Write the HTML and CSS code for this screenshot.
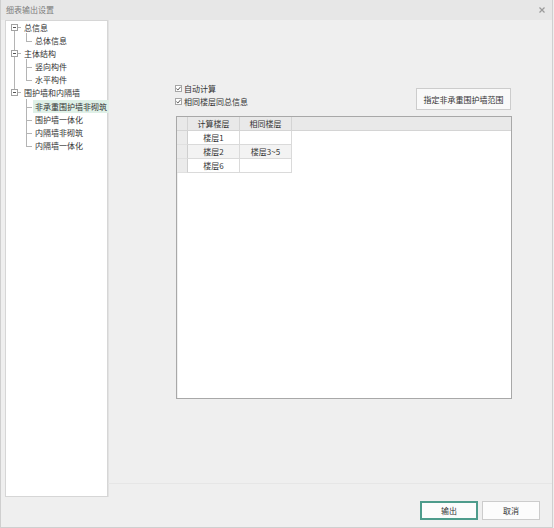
FILE: index.html
```html
<!DOCTYPE html>
<html lang="zh-CN">
<head>
<meta charset="utf-8">
<title>细表输出设置</title>
<link rel="stylesheet" href="styles.css">
</head>
<body>
<div class="window">
  <div class="titlebar">
    <span class="title">细表输出设置</span>
    <svg class="close" width="6" height="6" viewBox="0 0 6 6"><path d="M0.5 0.5L5.5 5.5M5.5 0.5L0.5 5.5" stroke="#9a9a9a" stroke-width="1.2"/></svg>
  </div>
  <div class="body">
    <div class="tree">
      <div class="group">
        <div class="node parent"><span class="exp"></span><span class="label">总信息</span></div>
        <div class="children">
          <div class="node child last"><span class="label">总体信息</span></div>
        </div>
      </div>
      <div class="group">
        <div class="node parent"><span class="exp"></span><span class="label">主体结构</span></div>
        <div class="children">
          <div class="node child"><span class="label">竖向构件</span></div>
          <div class="node child last"><span class="label">水平构件</span></div>
        </div>
      </div>
      <div class="group final">
        <div class="node parent"><span class="exp"></span><span class="label">围护墙和内隔墙</span></div>
        <div class="children">
          <div class="node child"><span class="label sel">非承重围护墙非砌筑</span></div>
          <div class="node child"><span class="label">围护墙一体化</span></div>
          <div class="node child"><span class="label">内隔墙非砌筑</span></div>
          <div class="node child last"><span class="label">内隔墙一体化</span></div>
        </div>
      </div>
    </div>
    <div class="content">
      <div class="options">
        <div class="checks">
          <label class="check"><span class="box"><svg width="5" height="5" viewBox="0 0 5 5"><path d="M0.4 2.6L1.9 4L4.6 0.8" fill="none" stroke="#444" stroke-width="0.9"/></svg></span>自动计算</label>
          <label class="check"><span class="box"><svg width="5" height="5" viewBox="0 0 5 5"><path d="M0.4 2.6L1.9 4L4.6 0.8" fill="none" stroke="#444" stroke-width="0.9"/></svg></span>相同楼层同总信息</label>
        </div>
        <button class="btn range">指定非承重围护墙范围</button>
      </div>
      <div class="grid">
        <div class="row head">
          <div class="rh"></div>
          <div class="cell">计算楼层</div>
          <div class="cell">相同楼层</div>
          <div class="fill"></div>
        </div>
        <div class="row">
          <div class="rh"></div>
          <div class="cell">楼层1</div>
          <div class="cell"></div>
        </div>
        <div class="row alt">
          <div class="rh"></div>
          <div class="cell">楼层2</div>
          <div class="cell">楼层3~5</div>
        </div>
        <div class="row">
          <div class="rh"></div>
          <div class="cell">楼层6</div>
          <div class="cell"></div>
        </div>
      </div>
    </div>
  </div>
  <div class="footer">
    <button class="btn primary">输出</button>
    <button class="btn">取消</button>
  </div>
</div>
</body>
</html>
```

FILE: styles.css
```css
* { box-sizing: border-box; }
html, body { margin: 0; padding: 0; background: #efefef; }
body {
  font-family: "Noto Sans CJK SC", "Noto Sans", sans-serif;
  font-size: 8px;
  color: #333;
}
.window {
  width: 553px;
  height: 528px;
  background: #efefef;
  border-left: 1px solid #cfcfcf;
  border-right: 1px solid #cfcfcf;
  border-bottom: 1px solid #cfcfcf;
  display: flex;
  flex-direction: column;
}
.titlebar {
  height: 20px;
  flex: none;
  background: #e7e7e7;
  display: flex;
  align-items: center;
  justify-content: space-between;
  padding: 0 7px 0 5px;
  color: #7c7c7c;
  line-height: 20px;
}
.close { display: block; }
.body {
  display: flex;
  align-items: flex-start;
  height: 477px;
  flex: none;
  padding-left: 4px;
}
.tree {
  width: 103px;
  height: 477px;
  background: #fff;
  border: 1px solid #d6d6d6;
  box-shadow: 1px 0 0 #e2e2e2;
  flex: none;
}
.group { position: relative; }
.group::before {
  content: "";
  position: absolute;
  left: 8px;
  top: 10px;
  bottom: -3px;
  width: 1px;
  background: #b4b4b4;
}
.group.final::before { display: none; }
.node {
  position: relative;
  height: 13.1px;
  line-height: 13px;
  white-space: nowrap;
}
.parent { padding-left: 16px; }
.exp {
  position: absolute;
  left: 5px;
  top: 3px;
  width: 7px;
  height: 7px;
  border: 1px solid #a2a2a2;
  background: #fff;
  z-index: 1;
}
.exp::after {
  content: "";
  position: absolute;
  left: 1px;
  top: 2px;
  width: 3px;
  height: 1px;
  background: #555;
}
.parent::after {
  content: "";
  position: absolute;
  left: 12px;
  top: 6px;
  width: 3px;
  height: 1px;
  background: #b4b4b4;
}
.child { padding-left: 27px; }
.child::before {
  content: "";
  position: absolute;
  left: 20px;
  top: -1px;
  height: 14.1px;
  width: 1px;
  background: #b4b4b4;
}
.child.last::before { height: 8px; }
.child::after {
  content: "";
  position: absolute;
  left: 20px;
  top: 7px;
  width: 6px;
  height: 1px;
  background: #b4b4b4;
}
.label {
  display: inline-block;
  padding: 0 2px;
  height: 13.1px;
}
.label.sel { background: #dff0e7; }

.content {
  flex: 1;
  height: 464px;
  border-bottom: 1px solid #e6e6e6;
  padding: 62px 40px 0 67px;
}
.options {
  display: flex;
  justify-content: space-between;
  align-items: flex-start;
}
.checks { display: flex; flex-direction: column; }
.check {
  display: flex;
  align-items: center;
  height: 13px;
  line-height: 13px;
}
.box {
  width: 7px;
  height: 7px;
  border: 1px solid #a6a6a6;
  background: #fff;
  margin-right: 2px;
  display: flex;
  align-items: center;
  justify-content: center;
}
.box svg { display: block; }
.btn {
  font-family: "Noto Sans CJK SC", "Noto Sans", sans-serif;
  font-size: 8px;
  color: #333;
  background: #f9f9f9;
  border: 1px solid #cccccc;
  padding: 0;
  margin: 0;
  border-radius: 0;
}
.range {
  width: 95px;
  height: 22px;
  margin-top: 6px;
  margin-right: 1px;
}
.grid {
  margin-top: 6px;
  margin-left: 1px;
  width: 336px;
  height: 283px;
  background: #fff;
  border: 1px solid #a8a8a8;
  box-shadow: inset 1px 1px 0 #f0f0f0;
}
.row {
  display: flex;
  height: 14px;
}
.row .rh {
  width: 11px;
  flex: none;
  background: #ebebeb;
  border-right: 1px solid #cfcfcf;
  border-bottom: 1px solid #e0e0e0;
}
.row .cell {
  width: 52px;
  flex: none;
  border-right: 1px solid #dadada;
  border-bottom: 1px solid #dadada;
  text-align: center;
  line-height: 13px;
}
.row.alt .cell { background: #f3f3f3; }
.row.head {
  background: #e9e9e9;
  border-bottom: 1px solid #d4d4d4;
  height: 14px;
}
.row.head .rh { background: #e9e9e9; border-right: 1px solid #d4d4d4; border-bottom: 0; }
.row.head .cell { border-bottom: 0; border-right: 1px solid #d4d4d4; }
.row.head .fill { flex: 1; }
.footer {
  display: flex;
  justify-content: flex-end;
  gap: 4px;
  padding: 4px 12px 0 0;
}
.footer .btn {
  width: 58px;
  height: 19px;
  background: #fcfcfc;
}
.footer .primary {
  border: 2px solid #4e9c8c;
}
```
